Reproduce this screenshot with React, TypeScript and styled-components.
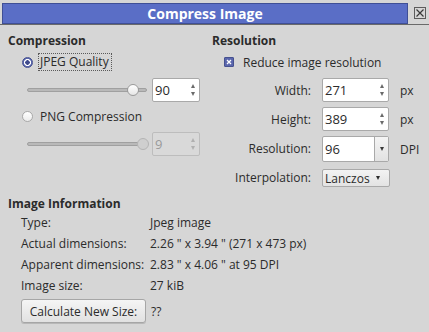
import React from "react";
import styled, { createGlobalStyle, css } from "styled-components";

const GlobalStyle = createGlobalStyle`
  html, body {
    margin: 0;
    padding: 0;
    background: #d6d6d6;
  }
  body {
    font-family: "Open Sans", "Noto Sans", sans-serif;
    font-size: 12px;
    color: #2b2b2b;
  }
`;

const Window = styled.div`
  width: 429px;
  height: 332px;
  background: #d6d6d6;
  box-sizing: border-box;
  overflow: hidden;
  white-space: nowrap;
`;

const TitleRow = styled.div`
  display: flex;
  align-items: center;
  height: 25px;
  border-bottom: 1px solid #6a6a6a;
  box-sizing: border-box;
`;

const TitleBar = styled.div`
  flex: 1;
  height: 21px;
  margin: 2px 0 0 2px;
  background: #5a6ec6;
  border: 1px solid #3f4f96;
  box-sizing: border-box;
  color: #ffffff;
  font-weight: bold;
  font-size: 14px;
  line-height: 19px;
  text-align: center;
`;

const CloseButton = styled.div`
  width: 12px;
  height: 12px;
  margin: 2px 3px 0 6px;
  border: 1px solid #5c5c5c;
  box-sizing: border-box;
  display: flex;
  align-items: center;
  justify-content: center;
`;

const Body = styled.div`
  display: grid;
  grid-template-columns: 204px 1fr;
  padding: 8px 0 0 8px;
`;

const Column = styled.div`
  display: flex;
  flex-direction: column;
`;

const Heading = styled.div`
  font-weight: bold;
  height: 16px;
  line-height: 16px;
`;

const OptionRow = styled.div<{ $top: number }>`
  display: flex;
  align-items: center;
  height: 18px;
  margin-top: ${(p) => p.$top}px;
  padding-left: 14px;
  gap: 7px;
`;

const Radio = styled.span<{ $checked?: boolean }>`
  width: 11px;
  height: 11px;
  border-radius: 50%;
  box-sizing: border-box;
  ${(p) =>
    p.$checked
      ? css`
          background: radial-gradient(circle, #3f4a8c 0 2px, #ffffff 2.5px 3.3px, #5a66ad 3.8px);
          border: 1px solid #46518f;
        `
      : css`
          background: linear-gradient(#ffffff, #ececec);
          border: 1px solid #a9a9a9;
        `}
`;

const FocusLabel = styled.span`
  border: 1px dotted #5a5a5a;
  padding: 0 2px 0 1px;
  line-height: 16px;
  margin-left: -2px;
`;

const SliderRow = styled.div<{ $top: number }>`
  display: flex;
  align-items: center;
  height: 24px;
  margin-top: ${(p) => p.$top}px;
  padding-left: 19px;
`;

const Track = styled.div`
  position: relative;
  width: 120px;
  height: 4px;
  border-radius: 2px;
  background: #b9b9b9;
  border: 1px solid #a0a0a0;
  box-sizing: border-box;
  margin-right: 5px;
`;

const Handle = styled.span<{ $disabled?: boolean }>`
  position: absolute;
  top: -5px;
  width: 12px;
  height: 12px;
  border-radius: 50%;
  box-sizing: border-box;
  border: 1px solid ${(p) => (p.$disabled ? "#b4b4b4" : "#9a9a9a")};
  background: ${(p) =>
    p.$disabled ? "#cfcfcf" : "linear-gradient(#ffffff, #e6e6e6)"};
`;

const SpinBox = styled.div<{ $width: number; $disabled?: boolean }>`
  display: flex;
  align-items: center;
  width: ${(p) => p.$width}px;
  height: 24px;
  box-sizing: border-box;
  border: 1px solid ${(p) => (p.$disabled ? "#bdbdbd" : "#a9a9a9")};
  border-radius: 2px;
  background: ${(p) => (p.$disabled ? "#d9d9d9" : "#ffffff")};
  color: ${(p) => (p.$disabled ? "#9a9a9a" : "#2b2b2b")};
  padding-left: 2px;
  font-size: 13px;
`;

const SpinValue = styled.span`
  flex: 1;
`;

const Arrows = styled.span<{ $disabled?: boolean }>`
  display: flex;
  flex-direction: column;
  align-items: center;
  justify-content: center;
  gap: 4px;
  width: 12px;
  height: 100%;
  color: ${(p) => (p.$disabled ? "#b0b0b0" : "#6a6a6a")};
`;

const Tri = styled.span<{ $down?: boolean }>`
  width: 0;
  height: 0;
  border-left: 2.5px solid transparent;
  border-right: 2.5px solid transparent;
  ${(p) =>
    p.$down
      ? css`border-top: 4px solid currentColor;`
      : css`border-bottom: 4px solid currentColor;`}
`;

const CheckRow = styled.div`
  display: flex;
  align-items: center;
  height: 18px;
  margin-top: 4px;
  padding-left: 12px;
  gap: 9px;
`;

const Checkbox = styled.span`
  width: 10px;
  height: 10px;
  background: #5a66ad;
  border: 1px solid #46518f;
  box-sizing: border-box;
  border-radius: 1px;
  display: flex;
  align-items: center;
  justify-content: center;
`;

const FieldGrid = styled.div`
  display: grid;
  grid-template-columns: 99px 67px auto;
  column-gap: 11px;
  align-items: center;
  margin-top: 7px;
`;

const FieldLabel = styled.span<{ $h: number; $mt?: number }>`
  text-align: right;
  height: ${(p) => p.$h}px;
  line-height: ${(p) => p.$h}px;
  margin-top: ${(p) => p.$mt ?? 0}px;
`;

const Cell = styled.div<{ $mt?: number }>`
  margin-top: ${(p) => p.$mt ?? 0}px;
`;

const Unit = styled.span<{ $mt?: number }>`
  margin-top: ${(p) => p.$mt ?? 0}px;
`;

const EditCombo = styled.div`
  display: flex;
  width: 67px;
  height: 26px;
  box-sizing: border-box;
  border: 1px solid #a9a9a9;
  border-radius: 2px;
  background: #ffffff;
  font-size: 13px;
`;

const ComboText = styled.span`
  flex: 1;
  padding-left: 2px;
  line-height: 24px;
`;

const ComboButton = styled.span`
  width: 13px;
  border-left: 1px solid #a9a9a9;
  background: linear-gradient(#f4f4f4, #e2e2e2);
  display: flex;
  align-items: center;
  justify-content: center;
  color: #3a3a3a;
`;

const DropCombo = styled.div`
  display: flex;
  align-items: center;
  gap: 6px;
  width: 68px;
  height: 18px;
  box-sizing: border-box;
  border: 1px solid #a9a9a9;
  border-radius: 2px;
  background: linear-gradient(#f3f3f3, #e3e3e3);
  padding-left: 2px;
  color: #2b2b2b;
`;

const InfoSection = styled.div`
  padding: 0 0 0 8px;
  margin-top: 9px;
`;

const InfoGrid = styled.div`
  display: grid;
  grid-template-columns: 129px 1fr;
  grid-auto-rows: 21px;
  align-items: center;
  padding-left: 13px;
  margin-top: 0;
`;

const ButtonRow = styled.div`
  display: flex;
  align-items: center;
  gap: 5px;
  padding-left: 21px;
  margin-top: 3px;
`;

const PushButton = styled.button`
  font: inherit;
  color: #2b2b2b;
  width: 125px;
  height: 24px;
  border: 1px solid #a6a6a6;
  border-radius: 3px;
  background: linear-gradient(#f5f5f5, #e1e1e1);
  box-shadow: 0 1px 0 #b8b8b8;
  padding: 0;
`;

function Spin({ value, width, disabled }: { value: string; width: number; disabled?: boolean }) {
  return (
    <SpinBox $width={width} $disabled={disabled}>
      <SpinValue>{value}</SpinValue>
      <Arrows $disabled={disabled}>
        <Tri />
        <Tri $down />
      </Arrows>
    </SpinBox>
  );
}

const info: [string, string][] = [
  ["Type:", "Jpeg image"],
  ["Actual dimensions:", "2.26 \" x 3.94 \" (271 x 473 px)"],
  ["Apparent dimensions:", "2.83 \" x 4.06 \" at 95 DPI"],
  ["Image size:", "27 kiB"],
];

export default function App(): React.ReactElement {
  return (
    <Window>
      <GlobalStyle />
      <TitleRow>
        <TitleBar>Compress Image</TitleBar>
        <CloseButton>
          <svg width="8" height="8" viewBox="0 0 8 8">
            <path d="M0.5 0.5 L7.5 7.5 M7.5 0.5 L0.5 7.5" stroke="#3a3a3a" strokeWidth="1.2" />
          </svg>
        </CloseButton>
      </TitleRow>
      <Body>
        <Column>
          <Heading>Compression</Heading>
          <OptionRow $top={4}>
            <Radio $checked />
            <FocusLabel>JPEG Quality</FocusLabel>
          </OptionRow>
          <SliderRow $top={7}>
            <Track>
              <Handle style={{ left: 99 }} />
            </Track>
            <Spin value="90" width={48} />
          </SliderRow>
          <OptionRow $top={5}>
            <Radio />
            <span>PNG Compression</span>
          </OptionRow>
          <SliderRow $top={7}>
            <Track>
              <Handle $disabled style={{ left: 109 }} />
            </Track>
            <Spin value="9" width={48} disabled />
          </SliderRow>
        </Column>
        <Column>
          <Heading>Resolution</Heading>
          <CheckRow>
            <Checkbox>
              <svg width="6" height="6" viewBox="0 0 6 6">
                <path d="M1 1 L5 5 M5 1 L1 5" stroke="#ffffff" strokeWidth="1.3" />
              </svg>
            </Checkbox>
            <span>Reduce image resolution</span>
          </CheckRow>
          <FieldGrid>
            <FieldLabel $h={23}>Width:</FieldLabel>
            <Cell>
              <Spin value="271" width={67} />
            </Cell>
            <Unit>px</Unit>
            <FieldLabel $h={23} $mt={5}>Height:</FieldLabel>
            <Cell $mt={5}>
              <Spin value="389" width={67} />
            </Cell>
            <Unit $mt={5}>px</Unit>
            <FieldLabel $h={26} $mt={5}>Resolution:</FieldLabel>
            <Cell $mt={5}>
              <EditCombo>
                <ComboText>96</ComboText>
                <ComboButton>
                  <Tri $down />
                </ComboButton>
              </EditCombo>
            </Cell>
            <Unit $mt={5}>DPI</Unit>
            <FieldLabel $h={18} $mt={7}>Interpolation:</FieldLabel>
            <Cell $mt={7}>
              <DropCombo>
                <span>Lanczos</span>
                <Tri $down />
              </DropCombo>
            </Cell>
            <span />
          </FieldGrid>
        </Column>
      </Body>
      <InfoSection>
        <Heading>Image Information</Heading>
        <InfoGrid>
          {info.map(([k, v]) => (
            <React.Fragment key={k}>
              <span>{k}</span>
              <span>{v}</span>
            </React.Fragment>
          ))}
        </InfoGrid>
      </InfoSection>
      <ButtonRow>
        <PushButton>Calculate New Size:</PushButton>
        <span>??</span>
      </ButtonRow>
    </Window>
  );
}
